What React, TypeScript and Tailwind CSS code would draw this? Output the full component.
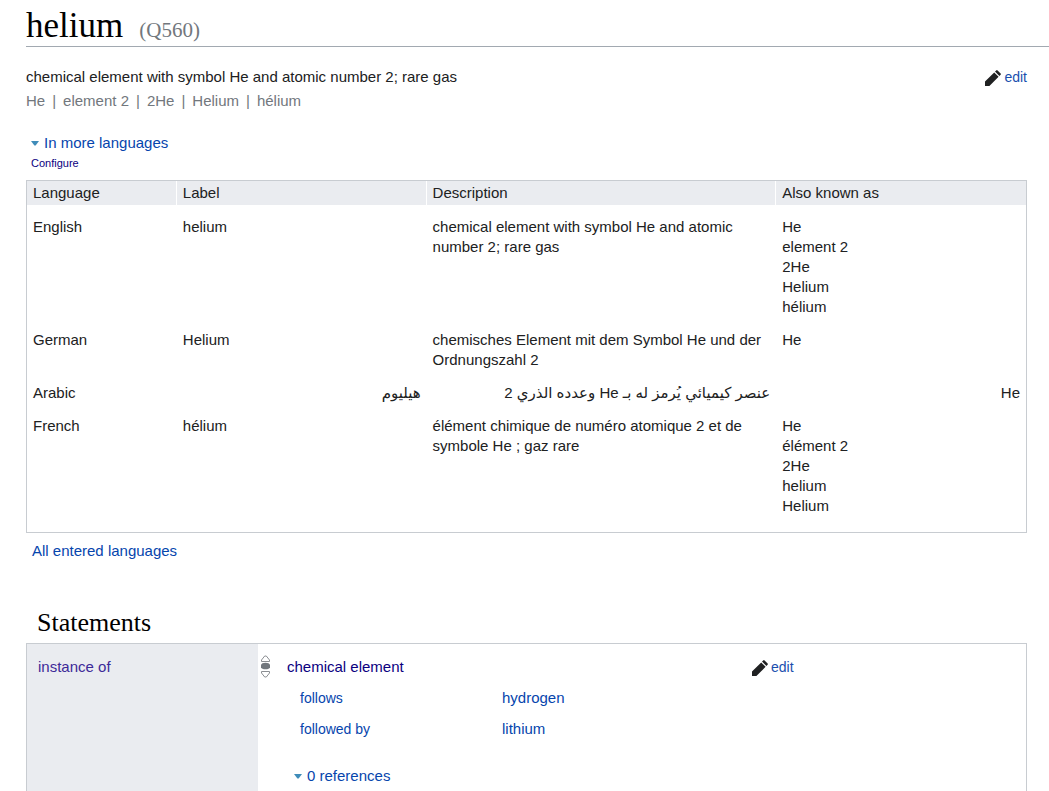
const aliases = ['He', 'element 2', '2He', 'Helium', 'hélium'];

type Row = {
  language: string;
  label: string;
  description: string;
  aliases: string[];
  lang: string;
  rtl?: boolean;
};

const rows: Row[] = [
  {
    language: 'English',
    lang: 'en',
    label: 'helium',
    description: 'chemical element with symbol He and atomic number 2; rare gas',
    aliases,
  },
  {
    language: 'German',
    lang: 'de',
    label: 'Helium',
    description: 'chemisches Element mit dem Symbol He und der Ordnungszahl 2',
    aliases: ['He'],
  },
  {
    language: 'Arabic',
    lang: 'ar',
    label: 'هيليوم',
    description: 'عنصر كيميائي يُرمز له بـ He وعدده الذري 2',
    aliases: ['He'],
    rtl: true,
  },
  {
    language: 'French',
    lang: 'fr',
    label: 'hélium',
    description: 'élément chimique de numéro atomique 2 et de symbole He ; gaz rare',
    aliases: ['He', 'élément 2', '2He', 'helium', 'Helium'],
  },
];

const qualifiers = [
  { property: 'follows', value: 'hydrogen' },
  { property: 'followed by', value: 'lithium' },
];

function Caret() {
  return (
    <svg aria-hidden="true" width="8" height="5" viewBox="0 0 8 5" className="shrink-0">
      <path d="M0 0h8L4.6 4.6H3.4z" fill="#3f8cb9" />
    </svg>
  );
}

function EditLink() {
  return (
    <a href="#edit" className="flex items-start gap-[3px] text-[14px] leading-5 text-[#1a4fae]">
      <svg aria-hidden="true" width="16" height="16" viewBox="0 0 16 16" className="mt-[3px]">
        <path
          d="M0 16v-4.4L9.2 2.4l4.4 4.4L4.4 16zM10 1.6l1.2-1.2q.7-.7 1.4 0l3 3q.7.7 0 1.4L14.4 6z"
          fill="#202122"
        />
      </svg>
      edit
    </a>
  );
}

function RankSelector() {
  return (
    <svg role="img" aria-label="Normal rank" width="9" height="23" viewBox="0 0 9 23">
      <path d="M3.7 1h1.6L8.5 5v1.5h-8V5z" fill="#fff" stroke="#8b8e92" />
      <ellipse cx="4.5" cy="11" rx="4.7" ry="3.2" fill="#72777d" />
      <path d="M3.7 22h1.6L8.5 18v-1.5h-8V18z" fill="#fff" stroke="#8b8e92" />
    </svg>
  );
}

export default function App() {
  return (
    <main className="flex min-h-screen flex-col bg-white pl-[26px] font-['Liberation_Sans','DejaVu_Sans',sans-serif] text-[15px] leading-5 text-[#202122]">
      <h1 className="flex items-baseline gap-4 border-b border-[#a2a9b1] pt-[6px] font-[Georgia,'Liberation_Serif',serif] text-[35px] leading-10 text-black">
        helium <span className="text-[21px] leading-none text-[#72777d]">(Q560)</span>
      </h1>

      <div className="mr-[22px] flex flex-1 flex-col">
        <div className="flex items-start justify-between pt-5">
          <div>
            <p>chemical element with symbol He and atomic number 2; rare gas</p>
            <ul className="mt-1 flex text-[#72777d]">
              {aliases.map((alias, i) => (
                <li key={alias} className="whitespace-pre">
                  {i > 0 && <span className="px-[7px]">|</span>}
                  {alias}
                </li>
              ))}
            </ul>
          </div>
          <EditLink />
        </div>

        <div className="mt-[22px] pl-[5px]">
          <button type="button" className="flex items-center gap-[5px] text-[#0645ad]">
            <Caret />
            In more languages
          </button>
          <a href="#configure" className="mt-[2px] block text-[11px] leading-4 text-[#0b0080]">
            Configure
          </a>
        </div>

        <div className="mt-[9px] border border-[#c8ccd1] pb-[3px]">
          <table className="w-full table-fixed border-separate border-spacing-0">
            <thead>
              <tr className="bg-[#eaecf0] text-left">
                <th className="w-[15%] border-r border-white px-[6px] pt-[2px] pb-[2px] font-normal">Language</th>
                <th className="w-[25%] border-r border-white px-[6px] font-normal">Label</th>
                <th className="w-[35%] border-r border-white px-[6px] font-normal">Description</th>
                <th className="w-[25%] px-[6px] font-normal">Also known as</th>
              </tr>
            </thead>
            <tbody className="align-top [&_td]:px-[6px] [&_td]:pb-[13px] [&>tr:first-child>td]:pt-3">
              {rows.map((row) => (
                <tr key={row.lang}>
                  <td>{row.language}</td>
                  <td lang={row.lang} dir={row.rtl ? 'rtl' : 'ltr'}>
                    {row.label}
                  </td>
                  <td lang={row.lang} dir={row.rtl ? 'rtl' : 'ltr'}>
                    {row.description}
                  </td>
                  <td lang={row.lang} dir={row.rtl ? 'rtl' : 'ltr'}>
                    <ul>
                      {row.aliases.map((alias) => (
                        <li key={alias}>{alias}</li>
                      ))}
                    </ul>
                  </td>
                </tr>
              ))}
            </tbody>
          </table>
        </div>
        <a href="#all-languages" className="mt-2 self-start pl-[6px] text-[#0645ad]">
          All entered languages
        </a>

        <h2 className="mt-[46px] pb-1 pl-[11px] font-[Georgia,'Liberation_Serif',serif] text-[26px] leading-8 text-black">
          Statements
        </h2>

        <section className="flex flex-1 border border-b-0 border-[#c8ccd1]">
          <div className="w-[231px] shrink-0 bg-[#eaecf0] px-[11px] pt-[13px]">
            <a href="#instance-of" className="text-[#3d2a98]">
              instance of
            </a>
          </div>
          <div className="flex flex-1 items-start pt-[11px] pl-[3px]">
            <RankSelector />
            <div className="w-[482px] pt-[2px] pl-[17px]">
              <a href="#chemical-element" className="block text-[#0b0080]">
                chemical element
              </a>
              <dl className="mt-[11px] grid grid-cols-[202px_1fr] gap-y-[11px] pl-[13px]">
                {qualifiers.map((q) => (
                  <div key={q.property} className="col-span-2 grid grid-cols-subgrid">
                    <dt>
                      <a href="#property" className="block text-[14px] text-[#0645ad]">
                        {q.property}
                      </a>
                    </dt>
                    <dd>
                      <a href="#value" className="block text-[#0645ad]">
                        {q.value}
                      </a>
                    </dd>
                  </div>
                ))}
              </dl>
              <button type="button" className="mt-[27px] ml-[7px] flex items-center gap-[5px] text-[#0645ad]">
                <Caret />0 references
              </button>
            </div>
            <div className="pt-[2px]">
              <EditLink />
            </div>
          </div>
        </section>
      </div>
    </main>
  );
}
